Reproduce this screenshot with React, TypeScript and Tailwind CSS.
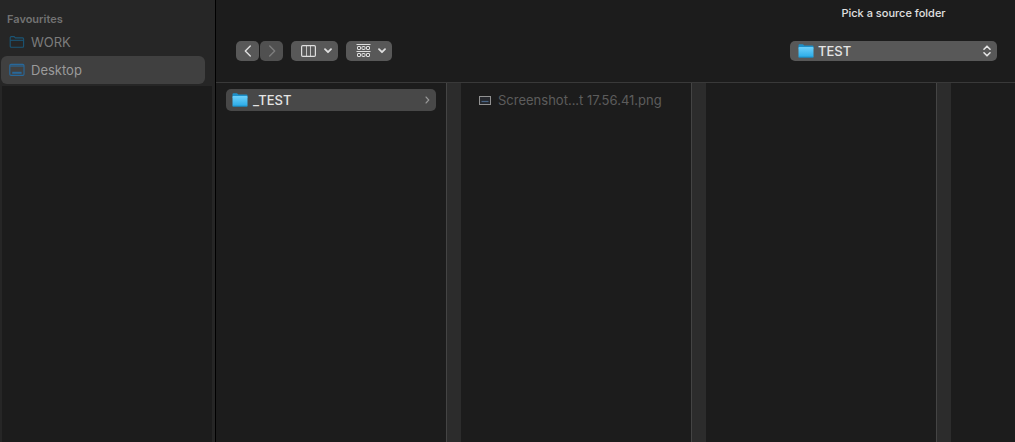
import React, { useState } from 'react'

type IconProps = { className?: string }

function FolderOutlineIcon({ className }: IconProps) {
  return (
    <svg className={className} width="16" height="14" viewBox="0 0 16 14" fill="none" stroke="currentColor" strokeWidth="1.1">
      <path d="M1.2 11.2V2.6a1 1 0 011-1h2.9l1.3 1.3h7.2a1 1 0 011 1v7.3a1 1 0 01-1 1H2.2a1 1 0 01-1-1z" />
      <path d="M1.2 5.3h13.4" />
    </svg>
  )
}

function DesktopIcon({ className }: IconProps) {
  return (
    <svg className={className} width="16" height="14" viewBox="0 0 16 14" fill="none" stroke="currentColor" strokeWidth="1.1">
      <rect x="0.8" y="1.4" width="14.2" height="11" rx="1.2" />
      <path d="M1 3h14" />
      <rect x="3.2" y="8.8" width="9.4" height="2" fill="currentColor" stroke="none" />
    </svg>
  )
}

function FolderIcon({ className }: IconProps) {
  return (
    <svg className={className} width="16" height="14" viewBox="0 0 16 14">
      <defs>
        <linearGradient id="folder-front" x1="0" y1="0" x2="0" y2="1">
          <stop offset="0" stopColor="#6dd0fa" />
          <stop offset="1" stopColor="#27a9e6" />
        </linearGradient>
      </defs>
      <path d="M0.5 1.2a.9.9 0 01.9-.9h3.4c.7 0 .9 1.1 1.7 1.1h8a1 1 0 011 1V5h-15z" fill="#1d8fc8" />
      <rect x="0.5" y="2.9" width="15" height="10.7" rx="0.9" fill="url(#folder-front)" />
      <path d="M1 13.2h14" stroke="#1683b8" strokeWidth="0.8" />
    </svg>
  )
}

function ImageFileIcon({ className }: IconProps) {
  return (
    <svg className={className} width="12" height="9" viewBox="0 0 12 9">
      <rect x="0.5" y="0.5" width="11" height="8" fill="#26282d" stroke="#929292" />
      <path d="M2.5 5.5h7" stroke="#4a6687" strokeWidth="1.2" />
    </svg>
  )
}

function Chevron({ dir, className }: IconProps & { dir: 'left' | 'right' }) {
  return (
    <svg className={className} width="8" height="12" viewBox="0 0 8 12" fill="none" stroke="currentColor" strokeWidth="1.4" strokeLinecap="round" strokeLinejoin="round">
      <path d={dir === 'left' ? 'M6.3 1L1.3 6l5 5' : 'M1.7 1l5 5-5 5'} />
    </svg>
  )
}

function ChevronDown({ className }: IconProps) {
  return (
    <svg className={className} width="8" height="6" viewBox="0 0 8 6" fill="none" stroke="currentColor" strokeWidth="1.8" strokeLinecap="round" strokeLinejoin="round">
      <path d="M1 1.2l3 3 3-3" />
    </svg>
  )
}

function ColumnsIcon() {
  return (
    <svg width="15" height="12" viewBox="0 0 15 12" fill="none" stroke="currentColor">
      <rect x="0.6" y="0.6" width="13.8" height="10.8" rx="1.2" strokeWidth="1.2" />
      <path d="M5.5 1v10M9.5 1v10" strokeOpacity="0.8" />
    </svg>
  )
}

function GroupIcon() {
  return (
    <svg width="15" height="14" viewBox="0 0 15 14" fill="none" stroke="currentColor">
      <path d="M0.5 0.5h14M0.5 7.5h14" />
      {[1.5, 6, 10.5].map(x => (
        <g key={x}>
          <rect x={x} y="2.5" width="3" height="3" rx="0.4" />
          <rect x={x} y="9.5" width="3" height="3" rx="0.4" />
        </g>
      ))}
    </svg>
  )
}

function UpDownIcon({ className }: IconProps) {
  return (
    <svg className={className} width="8" height="12" viewBox="0 0 8 12" fill="none" stroke="currentColor" strokeWidth="1.6" strokeLinecap="round" strokeLinejoin="round">
      <path d="M1 4.2l3-3 3 3M1 7.8l3 3 3-3" />
    </svg>
  )
}

const FAVOURITES = [
  { name: 'WORK', Icon: FolderOutlineIcon, color: 'text-[#1b5575]' },
  { name: 'Desktop', Icon: DesktopIcon, color: 'text-[#28689a]' },
]

function Sidebar() {
  const [active, setActive] = useState('Desktop')

  return (
    <nav className="flex w-54 shrink-0 flex-col border-r border-black bg-[#262626] pt-[11px]" aria-labelledby="favourites">
      <h2 id="favourites" className="mb-px px-[7px] text-[11px] leading-4 font-semibold text-[#727272]">Favourites</h2>
      <ul className="pl-px pr-2.5">
        {FAVOURITES.map(({ name, Icon, color }) => (
          <li key={name}>
            <button
              onClick={() => setActive(name)}
              className={`flex h-7 w-full items-center gap-1.5 rounded-md px-2 text-[13px] leading-4 ${
                name === active ? 'bg-[#404040] text-[#9b9b9b]' : 'text-[#7c7c7c]'
              }`}
            >
              <Icon className={color} />
              {name}
            </button>
          </li>
        ))}
      </ul>
      <div className="mt-0.5 mr-[3px] ml-0.5 flex-1 bg-[#1c1c1c]" />
    </nav>
  )
}

function Toolbar() {
  return (
    <header className="flex h-[83px] shrink-0 items-start justify-between border-b border-[#393939] pr-[18px] pl-5">
      <div className="flex gap-2 pt-[41px] text-[#dedede]">
        <div className="flex gap-px">
          <button aria-label="Back" className="flex h-5 w-[23px] items-center justify-center rounded-[5px] bg-[#585858]">
            <Chevron dir="left" />
          </button>
          <button aria-label="Forward" disabled className="flex h-5 w-[23px] items-center justify-center rounded-[5px] bg-[#505050] text-[#7d7d7d]">
            <Chevron dir="right" />
          </button>
        </div>
        <button aria-label="View as columns" className="flex h-5 w-[47px] items-center justify-between rounded-[5px] bg-[#585858] pr-1.5 pl-2.5">
          <ColumnsIcon />
          <ChevronDown />
        </button>
        <button aria-label="Group items" className="flex h-5 w-[46px] items-center justify-between rounded-[5px] bg-[#585858] pr-1.5 pl-2.5">
          <GroupIcon />
          <ChevronDown />
        </button>
      </div>

      <div className="flex w-[207px] flex-col gap-5 pt-[5px]">
        <label htmlFor="location" className="text-center text-[11px] leading-4 font-medium text-[#e0e0e0]">Pick a source folder</label>
        <div className="relative">
          <select
            id="location"
            defaultValue="TEST"
            className="block h-5 w-full appearance-none rounded-[5px] bg-[#585858] pr-6 pl-7 text-[13px] leading-5 font-medium text-[#e4e4e4] outline-none"
          >
            <option>TEST</option>
          </select>
          <FolderIcon className="pointer-events-none absolute top-[3px] left-2" />
          <UpDownIcon className="pointer-events-none absolute top-1 right-1.5 text-[#e4e4e4]" />
        </div>
      </div>
    </header>
  )
}

function Column({ children }: { children?: React.ReactNode }) {
  return (
    <section className="flex w-[245px] shrink-0">
      <div className="min-w-0 flex-1 px-2.5 pt-1.5">{children}</div>
      <div className="w-[15px] shrink-0 border-l border-[#444] bg-[#2c2c2c]" />
    </section>
  )
}

export default function App() {
  return (
    <div className="flex min-h-screen bg-[#1c1c1c] font-['Inter',sans-serif] select-none">
      <Sidebar />
      <main className="flex min-w-0 flex-1 flex-col">
        <Toolbar />
        <div className="flex flex-1 overflow-hidden">
          <Column>
            <button className="flex h-[22px] w-full items-center gap-[5px] rounded-[5px] bg-[#484848] px-1.5 text-[13px] leading-4 font-medium text-[#e4e4e4]">
              <FolderIcon />
              <span className="flex-1 text-left">_TEST</span>
              <svg width="5" height="8" viewBox="0 0 5 8" fill="none" stroke="#999" strokeWidth="1.1" strokeLinecap="round">
                <path d="M1 1l2.8 3L1 7" />
              </svg>
            </button>
          </Column>
          <Column>
            <button disabled className="flex h-[22px] w-full items-center gap-[7px] pl-2 text-[13px] leading-4 text-[#5c5c5c]">
              <ImageFileIcon />
              Screenshot...t 17.56.41.png
            </button>
          </Column>
          <Column />
        </div>
      </main>
    </div>
  )
}
